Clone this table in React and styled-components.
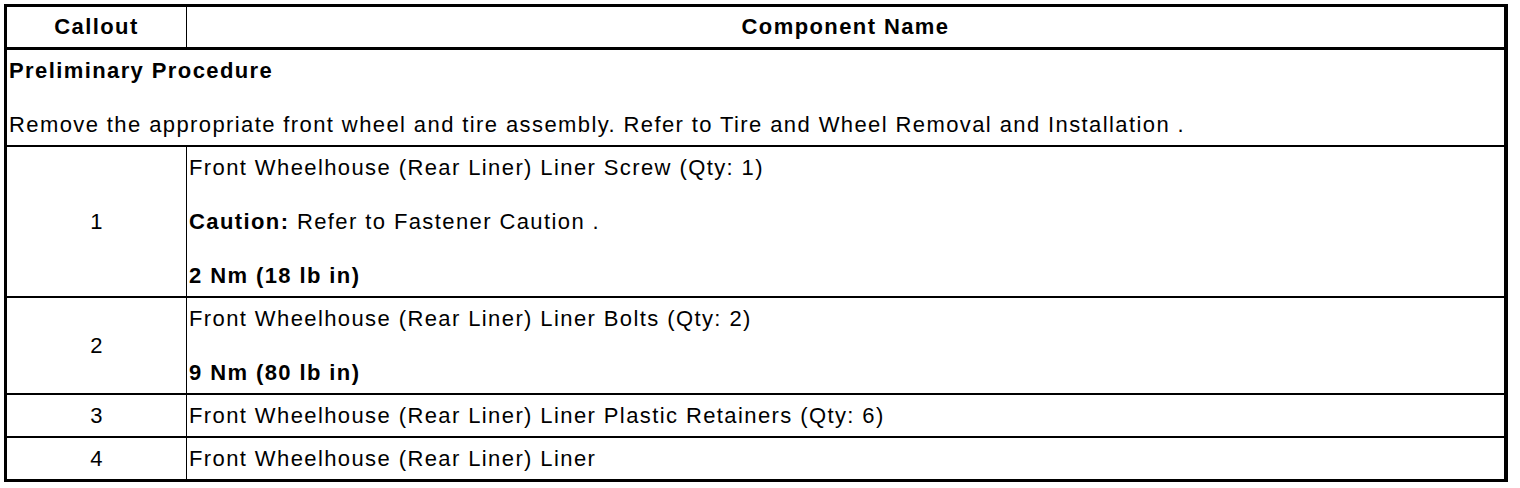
import React from 'react'
import styled, { createGlobalStyle } from 'styled-components'

const GlobalStyle = createGlobalStyle`
  html, body {
    margin: 0;
    padding: 0;
    background: #fff;
  }
  body {
    font-family: "Liberation Sans", Arial, Helvetica, sans-serif;
    color: #000;
  }
`

const rows = [
  {
    callout: '1',
    lines: [
      { text: 'Front Wheelhouse (Rear Liner) Liner Screw (Qty: 1)' },
      { label: 'Caution:', text: ' Refer to Fastener Caution .' },
      { bold: '2 Nm (18 lb in)' },
    ],
  },
  {
    callout: '2',
    lines: [
      { text: 'Front Wheelhouse (Rear Liner) Liner Bolts (Qty: 2)' },
      { bold: '9 Nm (80 lb in)' },
    ],
  },
  {
    callout: '3',
    lines: [{ text: 'Front Wheelhouse (Rear Liner) Liner Plastic Retainers (Qty: 6)' }],
  },
  {
    callout: '4',
    lines: [{ text: 'Front Wheelhouse (Rear Liner) Liner' }],
  },
]

const App = () => {
  return (
    <>
      <GlobalStyle />
      <Page>
        <Table>
          <colgroup>
            <col style={{ width: 180 }} />
            <col />
          </colgroup>
          <thead>
            <tr>
              <HeadCell $divider>Callout</HeadCell>
              <HeadCell>Component Name</HeadCell>
            </tr>
          </thead>
          <tbody>
            <tr>
              <Cell colSpan={2}>
                <Para><strong>Preliminary Procedure</strong></Para>
                <Para>
                  Remove the appropriate front wheel and tire assembly. Refer to Tire and Wheel Removal and Installation .
                </Para>
              </Cell>
            </tr>
            {rows.map((row, i) => (
              <tr key={row.callout}>
                <CalloutCell $last={i === rows.length - 1}>{row.callout}</CalloutCell>
                <Cell $last={i === rows.length - 1}>
                  {row.lines.map((line, j) => (
                    <Para key={j}>
                      {line.label && <strong>{line.label}</strong>}
                      {line.text}
                      {line.bold && <strong>{line.bold}</strong>}
                    </Para>
                  ))}
                </Cell>
              </tr>
            ))}
          </tbody>
        </Table>
      </Page>
    </>
  )
}

const Page = styled.div`
  padding: 4px 0 0 4px;
`

const Table = styled.table`
  width: 1504px;
  table-layout: fixed;
  border-collapse: separate;
  border-spacing: 0;
  border: 3px solid #000;
  border-right-width: 4px;
  font-size: 22px;
  letter-spacing: 1.4px;
`

const HeadCell = styled.th`
  padding: 8px 1px;
  font-weight: bold;
  text-align: center;
  vertical-align: middle;
  line-height: 24px;
  border-bottom: 3px solid #000;
  border-right: ${(p) => (p.$divider ? '1px solid #000' : 'none')};
`

const Cell = styled.td`
  padding: 8px 1px 8px 2px;
  text-align: left;
  vertical-align: middle;
  line-height: 25px;
  border-bottom: ${(p) => (p.$last ? 'none' : '2px solid #000')};
`

const CalloutCell = styled(Cell)`
  text-align: center;
  border-right: 1px solid #000;
`

const Para = styled.p`
  margin: 0;
  & + & {
    margin-top: 29px;
  }
  strong {
    font-weight: bold;
  }
`

export default App
